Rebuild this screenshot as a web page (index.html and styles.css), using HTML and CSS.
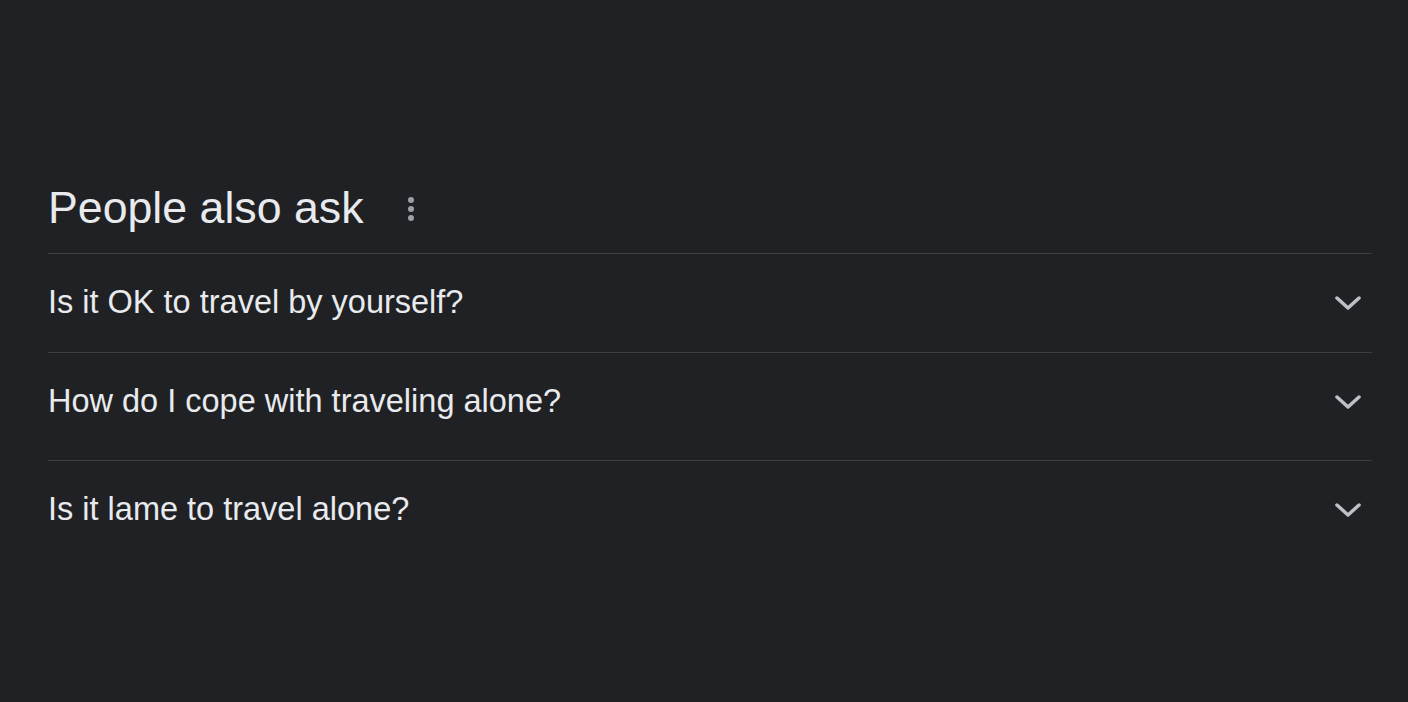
FILE: index.html
```html
<!DOCTYPE html>
<html lang="en">
<head>
  <meta charset="UTF-8">
  <title>People also ask</title>
  <link rel="stylesheet" href="styles.css">
</head>
<body>
  <div class="paa">
    <div class="paa-head">
      <h2>People also ask</h2>
      <svg class="more" width="8" height="26" viewBox="0 0 8 26">
        <circle cx="4" cy="4" r="3"/>
        <circle cx="4" cy="13" r="3"/>
        <circle cx="4" cy="22" r="3"/>
      </svg>
    </div>
    <div class="q">
      <span>Is it OK to travel by yourself?</span>
      <svg class="chev" width="26" height="16" viewBox="0 0 26 16"><polyline points="2,3 13,13 24,3"/></svg>
    </div>
    <div class="q tall">
      <span>How do I cope with traveling alone?</span>
      <svg class="chev" width="26" height="16" viewBox="0 0 26 16"><polyline points="2,3 13,13 24,3"/></svg>
    </div>
    <div class="q last">
      <span>Is it lame to travel alone?</span>
      <svg class="chev" width="26" height="16" viewBox="0 0 26 16"><polyline points="2,3 13,13 24,3"/></svg>
    </div>
  </div>
</body>
</html>
```

FILE: styles.css
```css
body {
  margin: 0;
  background-color: #202124;
  color: #e8eaed;
  font-family: "Liberation Sans", Arial, sans-serif;
}
.paa {
  padding: 182px 36px 0 48px;
}
.paa-head {
  display: flex;
  align-items: center;
  gap: 43px;
  padding-bottom: 19px;
  border-bottom: 1px solid #3c4043;
}
.paa-head h2 {
  margin: 0;
  font-size: 44.7px;
  line-height: 52px;
  font-weight: normal;
}
.more {
  fill: #9aa0a6;
  margin-top: 2px;
}
.q {
  display: flex;
  align-items: center;
  justify-content: space-between;
  padding: 28px 11px 30px 0;
  font-size: 32.5px;
  line-height: 40px;
  border-bottom: 1px solid #3c4043;
}
.q.tall {
  padding-bottom: 39px;
}
.q.last {
  border-bottom: none;
}
.chev {
  fill: none;
  stroke: #bdc1c6;
  stroke-width: 3.5;
  stroke-linecap: round;
  stroke-linejoin: round;
  margin-top: 2px;
}
```
